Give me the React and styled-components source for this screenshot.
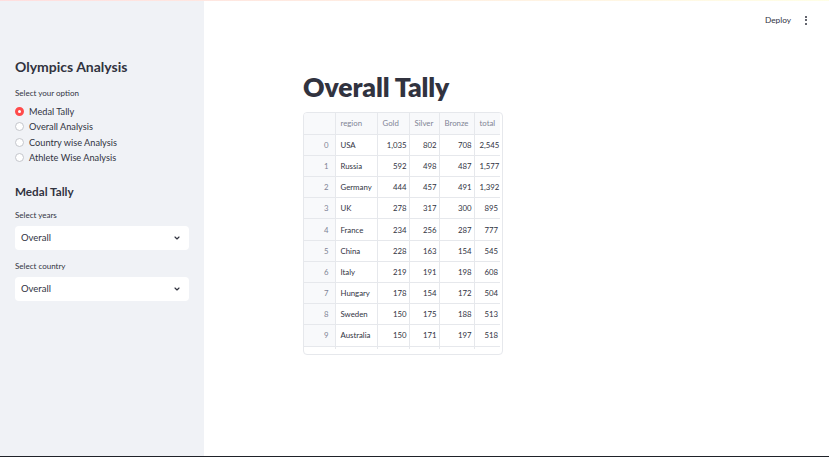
import React from 'react'
import styled, { createGlobalStyle } from 'styled-components'

const GlobalStyle = createGlobalStyle`
    html, body {
        margin: 0;
        padding: 0;
        background: #ffffff;
    }
    * {
        box-sizing: border-box;
    }
    body {
        font-family: Lato, "Liberation Sans", sans-serif;
        color: #31333f;
    }
`;

const medals = [
    { region: 'USA', gold: '1,035', silver: '802', bronze: '708', total: '2,545' },
    { region: 'Russia', gold: '592', silver: '498', bronze: '487', total: '1,577' },
    { region: 'Germany', gold: '444', silver: '457', bronze: '491', total: '1,392' },
    { region: 'UK', gold: '278', silver: '317', bronze: '300', total: '895' },
    { region: 'France', gold: '234', silver: '256', bronze: '287', total: '777' },
    { region: 'China', gold: '228', silver: '163', bronze: '154', total: '545' },
    { region: 'Italy', gold: '219', silver: '191', bronze: '198', total: '608' },
    { region: 'Hungary', gold: '178', silver: '154', bronze: '172', total: '504' },
    { region: 'Sweden', gold: '150', silver: '175', bronze: '188', total: '513' },
    { region: 'Australia', gold: '150', silver: '171', bronze: '197', total: '518' },
]

const options = ['Medal Tally', 'Overall Analysis', 'Country wise Analysis', 'Athlete Wise Analysis']

function Chevron() {
    return (
        <svg width="8" height="8" viewBox="0 0 24 24" fill="none" stroke="#31333f" strokeWidth="3.5" strokeLinecap="round" strokeLinejoin="round">
            <path d="M6 9l6 6 6-6" />
        </svg>
    )
}

function SelectBox({ label, value }) {
    return (
        <Field>
            <FieldLabel>{label}</FieldLabel>
            <Select>
                <span>{value}</span>
                <Chevron />
            </Select>
        </Field>
    )
}

function App() {
    return (
        <>
            <GlobalStyle />
            <AppStyled>
                <Decoration />
                <Body>
                    <Sidebar>
                        <SideTitle>Olympics Analysis</SideTitle>
                        <FieldLabel>Select your option</FieldLabel>
                        <RadioGroup>
                            {options.map((opt, i) => (
                                <RadioItem key={opt}>
                                    <RadioCircle checked={i === 0} />
                                    <span>{opt}</span>
                                </RadioItem>
                            ))}
                        </RadioGroup>
                        <SideHeading>Medal Tally</SideHeading>
                        <SelectBox label="Select years" value="Overall" />
                        <SelectBox label="Select country" value="Overall" />
                    </Sidebar>
                    <Main>
                        <Toolbar>
                            <DeployButton>Deploy</DeployButton>
                            <MenuDots>
                                <i /><i /><i />
                            </MenuDots>
                        </Toolbar>
                        <Block>
                            <PageTitle>Overall Tally</PageTitle>
                            <TableWrap>
                                <Table>
                                    <thead>
                                        <Row>
                                            <HeadCell></HeadCell>
                                            <HeadCell align="left">region</HeadCell>
                                            <HeadCell align="left">Gold</HeadCell>
                                            <HeadCell align="left">Silver</HeadCell>
                                            <HeadCell align="left">Bronze</HeadCell>
                                            <HeadCell align="left">total</HeadCell>
                                        </Row>
                                    </thead>
                                    <tbody>
                                        {medals.map((m, i) => (
                                            <Row key={m.region}>
                                                <IndexCell>{i}</IndexCell>
                                                <Cell align="left">{m.region}</Cell>
                                                <Cell>{m.gold}</Cell>
                                                <Cell>{m.silver}</Cell>
                                                <Cell>{m.bronze}</Cell>
                                                <Cell>{m.total}</Cell>
                                            </Row>
                                        ))}
                                        <FillerRow>
                                            <Filler /><Filler /><Filler /><Filler /><Filler /><Filler />
                                        </FillerRow>
                                    </tbody>
                                </Table>
                            </TableWrap>
                        </Block>
                    </Main>
                </Body>
            </AppStyled>
        </>
    )
}

const AppStyled = styled.div`
    height: 457px;
    display: flex;
    flex-direction: column;
    border-bottom: 1px solid #1f2229;
    overflow: hidden;
`;

const Decoration = styled.div`
    height: 1px;
    flex: none;
    background: linear-gradient(90deg, rgba(255, 75, 75, 0.18), rgba(255, 253, 128, 0.2));
`;

const Body = styled.div`
    flex: 1;
    display: flex;
    min-height: 0;
`;

const Sidebar = styled.aside`
    width: 204px;
    flex: none;
    background: #f0f2f6;
    padding: 56px 15px 0 15px;
    display: flex;
    flex-direction: column;
`;

const SideTitle = styled.h2`
    margin: 0 0 11px;
    font-size: 14px;
    font-weight: 700;
    line-height: 20px;
    color: #31333f;
`;

const SideHeading = styled.h3`
    margin: 19px 0 11px;
    font-size: 11.7px;
    font-weight: 700;
    line-height: 16px;
    color: #31333f;
`;

const FieldLabel = styled.div`
    font-size: 8px;
    line-height: 11px;
    color: #31333f;
    margin-bottom: 5px;
`;

const RadioGroup = styled.div`
    display: flex;
    flex-direction: column;
    gap: 3.5px;
    margin-top: 1px;
`;

const RadioItem = styled.label`
    display: flex;
    align-items: center;
    gap: 5px;
    height: 12px;
    font-size: 9.2px;
    color: #31333f;
`;

const RadioCircle = styled.span`
    width: 9px;
    height: 9px;
    border-radius: 50%;
    flex: none;
    background: #ffffff;
    border: ${p => (p.checked ? '3px solid #ff4b4b' : '1px solid #c4c6cc')};
`;

const Field = styled.div`
    display: flex;
    flex-direction: column;
    margin-bottom: 11px;
`;

const Select = styled.div`
    height: 24px;
    background: #ffffff;
    border-radius: 4px;
    display: flex;
    align-items: center;
    justify-content: space-between;
    padding: 0 8px 0 6px;
    font-size: 9.5px;
    color: #31333f;
`;

const Main = styled.main`
    flex: 1;
    display: flex;
    flex-direction: column;
    background: #ffffff;
`;

const Toolbar = styled.div`
    height: 38px;
    display: flex;
    align-items: center;
    justify-content: flex-end;
    padding-right: 22px;
    gap: 14px;
`;

const DeployButton = styled.span`
    font-size: 8.3px;
    color: #31333f;
`;

const MenuDots = styled.span`
    display: flex;
    flex-direction: column;
    gap: 1.5px;
    i {
        width: 2px;
        height: 2px;
        background: #31333f;
        border-radius: 50%;
    }
`;

const Block = styled.div`
    width: 427px;
    margin: 0 auto;
    padding-top: 31px;
`;

const PageTitle = styled.h1`
    margin: 0 0 8px;
    font-size: 26.5px;
    font-weight: 800;
    line-height: 34px;
    color: #31333f;
    letter-spacing: -0.1px;
`;

const TableWrap = styled.div`
    width: 200px;
    border: 1px solid #e6e8ec;
    border-radius: 4px;
    padding-bottom: 5px;
    overflow: hidden;
`;

const Table = styled.table`
    border-collapse: collapse;
    font-size: 7.8px;
    width: 196px;
    table-layout: fixed;
`;

const Row = styled.tr`
    height: 21.2px;
`;

const FillerRow = styled.tr`
    height: 1px;
`;

const HeadCell = styled.th`
    font-weight: 400;
    color: #808495;
    text-align: ${p => p.align || 'right'};
    padding: 0 4px 0 5px;
    background: #f8f9fb;
    border-right: 1px solid #e6e8ec;
    border-bottom: 1px solid #e6e8ec;
    white-space: nowrap;
    &:first-child { width: 31px; }
    &:nth-child(2) { width: 42px; }
    &:nth-child(3) { width: 32px; }
    &:nth-child(4) { width: 30px; }
    &:nth-child(5) { width: 35px; }
    &:last-child { border-right: none; }
`;

const Cell = styled.td`
    text-align: ${p => p.align || 'right'};
    padding: 0 2px 0 5px;
    color: #31333f;
    border-right: 1px solid #e6e8ec;
    border-bottom: 1px solid #e6e8ec;
    white-space: nowrap;
    &:last-child { border-right: none; }
`;

const IndexCell = styled(Cell)`
    color: #808495;
    padding-right: 6px;
    background: #f8f9fb;
`;

const Filler = styled.td`
    border-right: 1px solid #e6e8ec;
    &:last-child { border-right: none; }
`;

export default App
